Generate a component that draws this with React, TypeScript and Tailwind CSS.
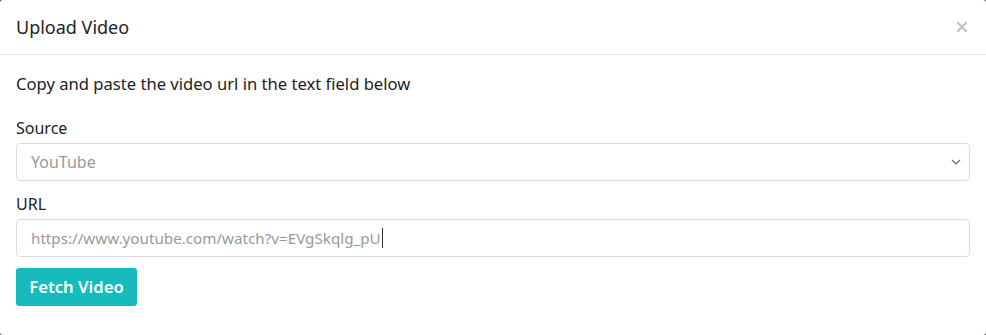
import React from 'react';

const App: React.FC = () => {
  return (
    <div className="w-[986px] h-[335px] bg-[#555] font-['Noto_Sans',sans-serif]">
      <div className="w-full h-full bg-white rounded-[3px] text-[#222]">
        <div className="h-[55px] flex items-center justify-between pl-4 pr-[19px] border-b border-[#e5e5e5]">
          <h1 className="text-[18px] leading-none">Upload Video</h1>
          {/* close */}
          <svg width="10" height="10" viewBox="0 0 10 10" className="text-[#c6c6c6]">
            <path d="M1 1L9 9M9 1L1 9" stroke="currentColor" strokeWidth="2.4" strokeLinecap="square" />
          </svg>
        </div>
        <div className="px-4 pt-[18px]">
          <p className="text-[16.6px] leading-[22px]">Copy and paste the video url in the text field below</p>
          <label className="block mt-[22px] text-[16px] leading-[22px]">Source</label>
          <div className="mt-[4px] h-[38px] flex items-center justify-between border border-[#dcdcdc] rounded-[4px] pl-[14px] pr-[8px] text-[#999] text-[16px]">
            <span>YouTube</span>
            <svg width="10" height="6" viewBox="0 0 10 6" className="text-[#777]">
              <path d="M1 1L5 5L9 1" fill="none" stroke="currentColor" strokeWidth="1.4" />
            </svg>
          </div>
          <label className="block mt-[12px] text-[16px] leading-[22px]">URL</label>
          <div className="mt-[4px] h-[38px] flex items-center border border-[#dcdcdc] rounded-[4px] pl-[14px] text-[#999] text-[15.2px]">
            <span>https://www.youtube.com/watch?v=EVgSkqlg_pU</span>
            <span className="w-px h-[20px] bg-[#333] ml-[1px]" />
          </div>
          <button className="mt-[11px] h-[38px] w-[121px] bg-[#17bbbb] rounded-[3px] text-white font-semibold text-[16.7px]">Fetch Video</button>
        </div>
      </div>
    </div>
  );
};

export default App;
